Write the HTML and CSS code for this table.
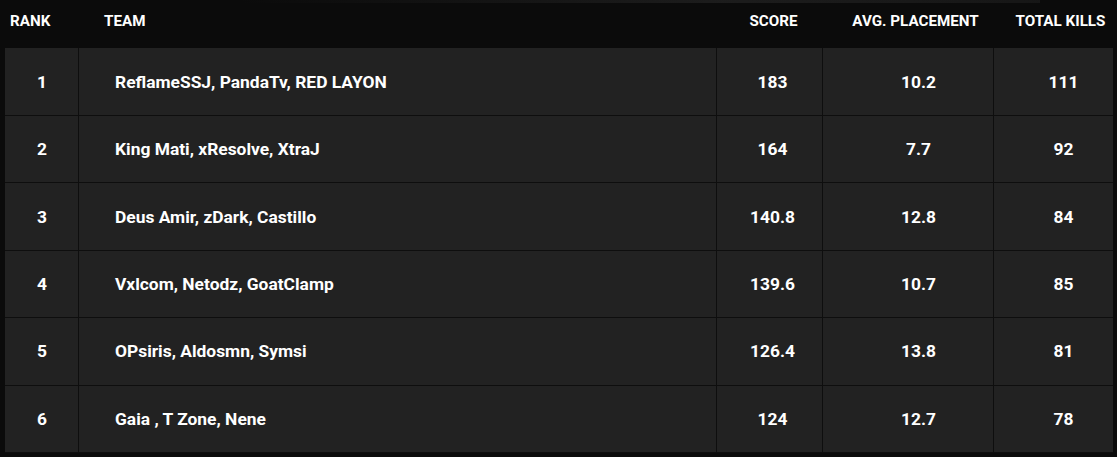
FILE: index.html
```html
<!DOCTYPE html>
<html lang="en">
<head>
<meta charset="utf-8">
<title>Leaderboard</title>
<link rel="stylesheet" href="styles.css">
</head>
<body>
<div class="board">
  <div class="glow"></div>
  <div class="row head">
    <div class="c rank">Rank</div>
    <div class="c team">Team</div>
    <div class="c score">Score</div>
    <div class="c avg">Avg. Placement</div>
    <div class="c kills">Total Kills</div>
  </div>
  <div class="rows">
    <div class="row item">
      <div class="c rank">1</div>
      <div class="c team">ReflameSSJ, PandaTv, RED LAYON</div>
      <div class="c score">183</div>
      <div class="c avg">10.2</div>
      <div class="c kills">111</div>
    </div>
    <div class="row item">
      <div class="c rank">2</div>
      <div class="c team">King Mati, xResolve, XtraJ</div>
      <div class="c score">164</div>
      <div class="c avg">7.7</div>
      <div class="c kills">92</div>
    </div>
    <div class="row item">
      <div class="c rank">3</div>
      <div class="c team">Deus Amir, zDark, Castillo</div>
      <div class="c score">140.8</div>
      <div class="c avg">12.8</div>
      <div class="c kills">84</div>
    </div>
    <div class="row item">
      <div class="c rank">4</div>
      <div class="c team">Vxlcom, Netodz, GoatClamp</div>
      <div class="c score">139.6</div>
      <div class="c avg">10.7</div>
      <div class="c kills">85</div>
    </div>
    <div class="row item">
      <div class="c rank">5</div>
      <div class="c team">OPsiris, Aldosmn, Symsi</div>
      <div class="c score">126.4</div>
      <div class="c avg">13.8</div>
      <div class="c kills">81</div>
    </div>
    <div class="row item">
      <div class="c rank">6</div>
      <div class="c team">Gaia , T Zone, Nene</div>
      <div class="c score">124</div>
      <div class="c avg">12.7</div>
      <div class="c kills">78</div>
    </div>
  </div>
</div>
</body>
</html>
```
FILE: styles.css
```css
html, body {
  margin: 0;
  padding: 0;
  background: #0b0b0b;
  color: #ffffff;
  font-family: Roboto, "Liberation Sans", Arial, sans-serif;
  font-weight: 700;
  overflow: hidden;
}

.board {
  position: relative;
  width: 1117px;
  height: 457px;
  background: #0b0b0b;
}

.glow {
  position: absolute;
  left: 240px;
  top: 0;
  width: 800px;
  height: 3px;
  background: linear-gradient(90deg, rgba(40,40,40,0) 0%, rgba(40,40,40,0.6) 60%, rgba(40,40,40,0.4) 100%);
}

.row {
  display: grid;
  grid-template-columns: 74px 638px 106px 171px 119px;
  margin-left: 5px;
  width: 1108px;
}

.head {
  height: 48px;
  align-items: center;
  font-size: 15.2px;
  text-transform: uppercase;
}

.head .c {
  padding-bottom: 7px;
}

.head .rank { padding-left: 5px; }
.head .team { padding-left: 25px; }
.head .score { text-align: center; padding-left: 7px; }
.head .avg { text-align: center; padding-left: 14px; }
.head .kills { text-align: center; padding-left: 14px; }

.item {
  height: 67.4px;
  box-sizing: border-box;
  border-bottom: 1px solid #0e0e0e;
  background: #222222;
  font-size: 17.4px;
}

.item:first-child {
  height: 68px;
}

.item .c {
  display: flex;
  align-items: center;
  justify-content: center;
  border-right: 1px solid #0e0e0e;
}

.item .c:last-child {
  border-right: none;
}

.item .rank { padding-left: 1px; }
.item .team { justify-content: flex-start; padding-left: 36px; }
.item .score { padding-left: 6px; }
.item .avg { padding-left: 21px; }
.item .kills { padding-left: 20px; }
```
